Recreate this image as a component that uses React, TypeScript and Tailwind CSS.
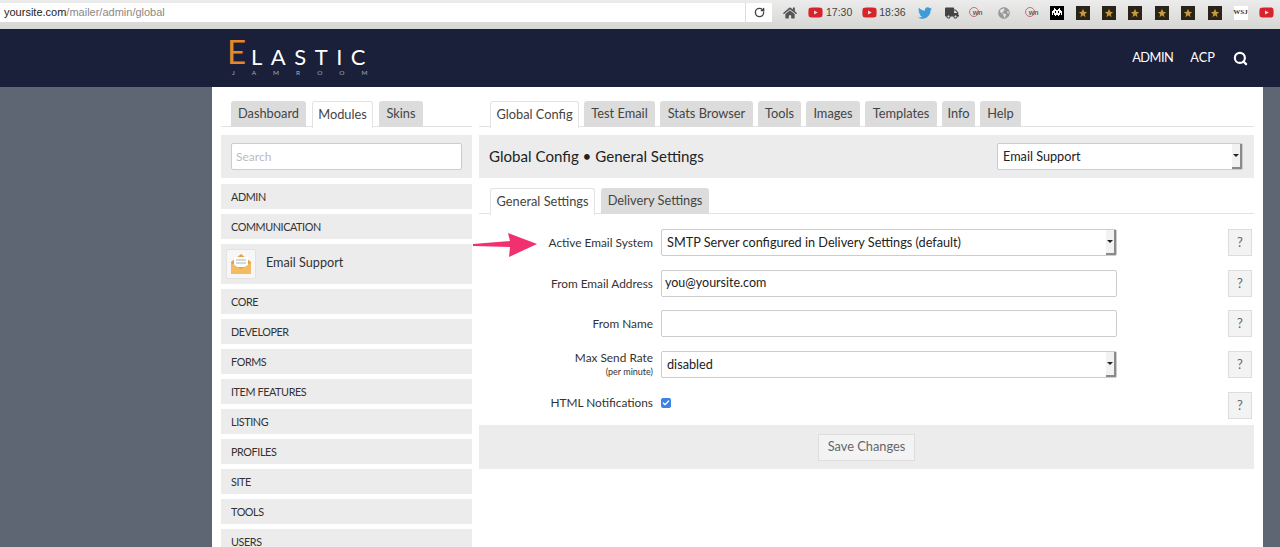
import { Check, RotateCw, Search } from "lucide-react";
import { FaGlobeAmericas, FaHome, FaTruck, FaTwitter, FaYoutube } from "react-icons/fa";

function Tab({ label, active, w }: { label: string; active?: boolean; w: string }) {
  return (
    <div
      className={`${w} h-[26px] flex items-center justify-center text-[12.8px] rounded-t-[3px] text-[#444] ${
        active ? "bg-white border border-b-0 border-[#e3e3e3] h-[27px] -mb-px z-10" : "bg-[#dcdcdc]"
      }`}
    >
      {label}
    </div>
  );
}

function Select({ value, className }: { value: string; className: string }) {
  return (
    <div
      className={`${className} h-[27px] flex items-center pl-[5px] pt-px bg-white border border-[#ccc] rounded-[2px] text-[12.7px] text-[#222] relative`}
    >
      {value}
      <div className="absolute right-0 top-0 bottom-0 w-[10px] border-r-2 border-b-2 border-[#8a8a8a] bg-[#f2f2f2] flex items-center justify-center">
        <div className="w-0 h-0 border-x-[3px] border-x-transparent border-t-[3px] border-t-[#222]" />
      </div>
    </div>
  );
}

function HelpButton() {
  return (
    <div className="w-[24px] h-[27px] flex items-center justify-center bg-[#f3f3f3] border border-[#ddd] text-[13px] text-[#666]">
      ?
    </div>
  );
}

function Row({ label, sub, children, mt, labelUp }: { label: string; sub?: string; children: React.ReactNode; mt: string; labelUp?: boolean }) {
  return (
    <div className={`flex items-center h-[27px] ${mt}`}>
      <div className={`w-[174px] text-right text-[11.85px] leading-[14px] text-[#333] ${labelUp ? "-mt-[5px]" : ""}`}>
        {label}
        {sub && <div className="text-[9px] leading-[13px]">{sub}</div>}
      </div>
      <div className="w-[456px] ml-2">{children}</div>
      <div className="ml-[111px]">
        <HelpButton />
      </div>
    </div>
  );
}

function StarFav() {
  return (
    <div className="w-[14px] h-[14px] shrink-0 bg-[#2a2418] flex items-center justify-center">
      <svg width="10" height="10" viewBox="0 0 12 12">
        <path d="M6 1 L7.5 4.5 L11 5 L8.2 7.2 L9 11 L6 8.8 L3 11 L3.8 7.2 L1 5 L4.5 4.5 Z" fill="#c99a3d" />
      </svg>
    </div>
  );
}

function OnFav() {
  return (
    <div className="w-[15px] h-[13px] shrink-0 relative flex items-center justify-center">
      <div className="absolute left-0 top-[1px] w-[10px] h-[10px] rounded-full border border-[#c96a78]" />
      <span className="relative text-[7px] font-bold text-[#666] leading-none pl-[3px]">wn</span>
    </div>
  );
}

function InvaderFav() {
  return (
    <div className="w-[14px] h-[14px] shrink-0 bg-black flex items-center justify-center">
      <svg width="12" height="10" viewBox="0 0 12 10">
        <path
          d="M3 0h1v1h1v1h2V1h1V0h1v2h1v1h1v4h-1V5h-1v2H8v1H7V7H5v1H4V7H3V5H2v2H1V3h1V2h1z M4 3v2h1V3z M7 3v2h1V3z"
          fill="#fff"
          fillRule="evenodd"
        />
      </svg>
    </div>
  );
}

const modules = ["CORE", "DEVELOPER", "FORMS", "ITEM FEATURES", "LISTING", "PROFILES", "SITE", "TOOLS", "USERS"];
const leftTabs = [
  { label: "Dashboard", w: "w-[75px]" },
  { label: "Modules", w: "w-[61px]", active: true },
  { label: "Skins", w: "w-[44px]" },
];
const rightTabs = [
  { label: "Global Config", w: "w-[89px]", active: true },
  { label: "Test Email", w: "w-[71px]" },
  { label: "Stats Browser", w: "w-[93px]" },
  { label: "Tools", w: "w-[43px]" },
  { label: "Images", w: "w-[54px]" },
  { label: "Templates", w: "w-[72px]" },
  { label: "Info", w: "w-[33px]" },
  { label: "Help", w: "w-[41px]" },
];

export default function App() {
  return (
    <div className="font-['Lato','Open_Sans',sans-serif] w-[1280px] h-[547px] overflow-hidden flex flex-col bg-[#5f6673]">
      {/* browser toolbar */}
      <div className="h-[29px] shrink-0 bg-gradient-to-b from-[#ececec] to-[#d6d6d4] pt-[3px] flex items-start font-['Liberation_Sans',sans-serif]">
        <div className="w-[745px] h-[19px] shrink-0 bg-white flex items-center pl-[4px] text-[11px] text-[#888]">
          <span className="text-[#222]">yoursite.com</span>/mailer/admin/global
        </div>
        <div className="w-[27px] h-[19px] shrink-0 bg-white border-l border-[#ddd] flex items-center justify-center">
          <RotateCw size={11} strokeWidth={3} className="text-[#444]" />
        </div>
        <div className="flex items-center h-[19px] ml-[11px] text-[10.5px] text-[#444] whitespace-nowrap">
          <FaHome size={14} className="text-[#555] shrink-0" />
          <FaYoutube size={15} className="text-[#d8232a] ml-[11px] shrink-0" />
          <span className="ml-[3px]">17:30</span>
          <FaYoutube size={15} className="text-[#d8232a] ml-[10px] shrink-0" />
          <span className="ml-[2px]">18:36</span>
          <FaTwitter size={14} className="text-[#3d9bd9] ml-[12px] shrink-0" />
          <FaTruck size={14} className="text-[#444] ml-[13px] shrink-0" />
          <div className="ml-[10px]"><OnFav /></div>
          <FaGlobeAmericas size={12} className="text-[#999] ml-[14px] shrink-0" />
          <div className="ml-[15px]"><OnFav /></div>
          <div className="ml-[10px]"><InvaderFav /></div>
          <div className="ml-[12px] flex gap-[12.4px]">
            <StarFav /><StarFav /><StarFav /><StarFav /><StarFav /><StarFav />
          </div>
          <div className="ml-[12px] w-[14px] h-[14px] shrink-0 bg-white flex items-center justify-center font-['Liberation_Serif',serif] font-bold text-[7px] text-[#333]">
            WSJ
          </div>
          <FaYoutube size={15} className="text-[#d8232a] ml-[11px] shrink-0" />
        </div>
      </div>

      {/* site header */}
      <div className="h-[58px] shrink-0 bg-[#1a2039] flex items-center text-white">
        <div className="ml-[227px] w-[150px]">
          <div className="flex items-end h-[28px] leading-none whitespace-nowrap">
            <span className="text-[33px] text-[#e8862a]">E</span>
            <span className="text-[22px] tracking-[8.5px] ml-[5px]">LASTIC</span>
          </div>
          <div className="text-[6.5px] leading-[8px] tracking-[17px] text-[#aab] ml-[5px] mt-px whitespace-nowrap">JAMROOM</div>
        </div>
        <div className="ml-auto flex items-center text-[12.8px] pr-[32px]">
          <span className="tracking-[-0.5px]">ADMIN</span>
          <span className="ml-[17px]">ACP</span>
          <Search size={15} strokeWidth={3.5} className="ml-[18px]" />
        </div>
      </div>

      {/* page panel */}
      <div className="ml-[212px] w-[1051px] flex-1 bg-white flex pl-[9px] pr-[9px] pt-[14px] gap-[7px] relative">
        {/* sidebar */}
        <div className="w-[251px] shrink-0">
          <div className="flex gap-[6px] pl-[10px] border-b border-[#e3e3e3] h-[26px]">
            {leftTabs.map((t) => (
              <Tab key={t.label} {...t} />
            ))}
          </div>
          <div className="mt-[8px] h-[43px] bg-[#ececec] flex items-center px-[10px]">
            <div className="w-full h-[27px] bg-white border border-[#ccc] rounded-[2px] pl-[4px] pt-px flex items-center text-[12px] text-[#bbb]">
              Search
            </div>
          </div>
          <div className="mt-[6px] flex flex-col gap-[5px]">
            {["ADMIN", "COMMUNICATION"].map((m) => (
              <div key={m} className="h-[25px] bg-[#ececec] pl-[10px] pt-px flex items-center text-[10.8px] tracking-[-0.4px] text-[#333]">
                {m}
              </div>
            ))}
            <div className="h-[40px] bg-[#ececec] pl-[5px] flex items-center text-[12.65px] text-[#333]">
              <div className="w-[30px] h-[30px] bg-[#f7f7f7] border border-[#e2e2e2] rounded-[2px] flex items-center justify-center">
                <svg width="24" height="24" viewBox="0 0 24 24">
                  <path d="M2 10 L12 2 L22 10 V22 H2 Z" fill="#e9a247" />
                  <rect x="5" y="5" width="14" height="10" fill="#fff" />
                  <path d="M7 8 H17 M7 11 H17" stroke="#9fb4c6" strokeWidth="1.2" />
                  <path d="M2 11 L12 17 L22 11 V22 H2 Z" fill="#f3bb62" />
                </svg>
              </div>
              <span className="ml-[10px] -mt-px">Email Support</span>
            </div>
            {modules.map((m) => (
              <div key={m} className="h-[25px] bg-[#ececec] pl-[10px] pt-px flex items-center text-[10.8px] tracking-[-0.4px] text-[#333] shrink-0">
                {m}
              </div>
            ))}
          </div>
        </div>

        {/* main column */}
        <div className="w-[775px] shrink-0">
          <div className="flex gap-[5px] pl-[11px] border-b border-[#e3e3e3] h-[26px]">
            {rightTabs.map((t) => (
              <Tab key={t.label} {...t} />
            ))}
          </div>
          <div className="mt-[8px] h-[43px] bg-[#ececec] flex items-center pl-[10px] pr-[11px] justify-between">
            <span className="text-[15.1px] text-[#222]">Global Config • General Settings</span>
            <Select value="Email Support" className="w-[246px]" />
          </div>
          <div className="mt-[10px] flex gap-[6px] pl-[11px] border-b border-[#e3e3e3] h-[26px]">
            <Tab label="General Settings" active w="w-[105px]" />
            <Tab label="Delivery Settings" w="w-[108px]" />
          </div>

          <Row label="Active Email System" mt="mt-[15px]">
            <Select value="SMTP Server configured in Delivery Settings (default)" className="w-[456px]" />
          </Row>
          <Row label="From Email Address" mt="mt-[14px]">
            <div className="h-[27px] bg-white border border-[#ccc] rounded-[2px] pl-[3px] flex items-center text-[12.5px] text-[#222]">
              you@yoursite.com
            </div>
          </Row>
          <Row label="From Name" mt="mt-[13px]">
            <div className="h-[27px] bg-white border border-[#ccc] rounded-[2px]" />
          </Row>
          <Row label="Max Send Rate" sub="(per minute)" mt="mt-[14px]">
            <Select value="disabled" className="w-[456px]" />
          </Row>
          <Row label="HTML Notifications" mt="mt-[14px]" labelUp>
            <div className="w-[10px] h-[10px] rounded-[2px] bg-[#3b82e6] flex items-center justify-center -mt-[5px]">
              <Check size={8} strokeWidth={4} className="text-white" />
            </div>
          </Row>

          <div className="mt-[6px] h-[44px] bg-[#ececec] flex items-center justify-center">
            <div className="w-[97px] h-[27px] bg-[#f3f3f3] border border-[#ddd] flex items-center justify-center text-[12.8px] text-[#666]">
              Save Changes
            </div>
          </div>
        </div>

        {/* annotation arrow */}
        <svg className="absolute left-[260px] top-[145px]" width="68" height="26" viewBox="0 0 68 26">
          <path d="M1 12 L38 9 L36 1 L65 12 L37 25 L38 15 L1 14 Z" fill="#f1316f" />
        </svg>
      </div>
    </div>
  );
}
